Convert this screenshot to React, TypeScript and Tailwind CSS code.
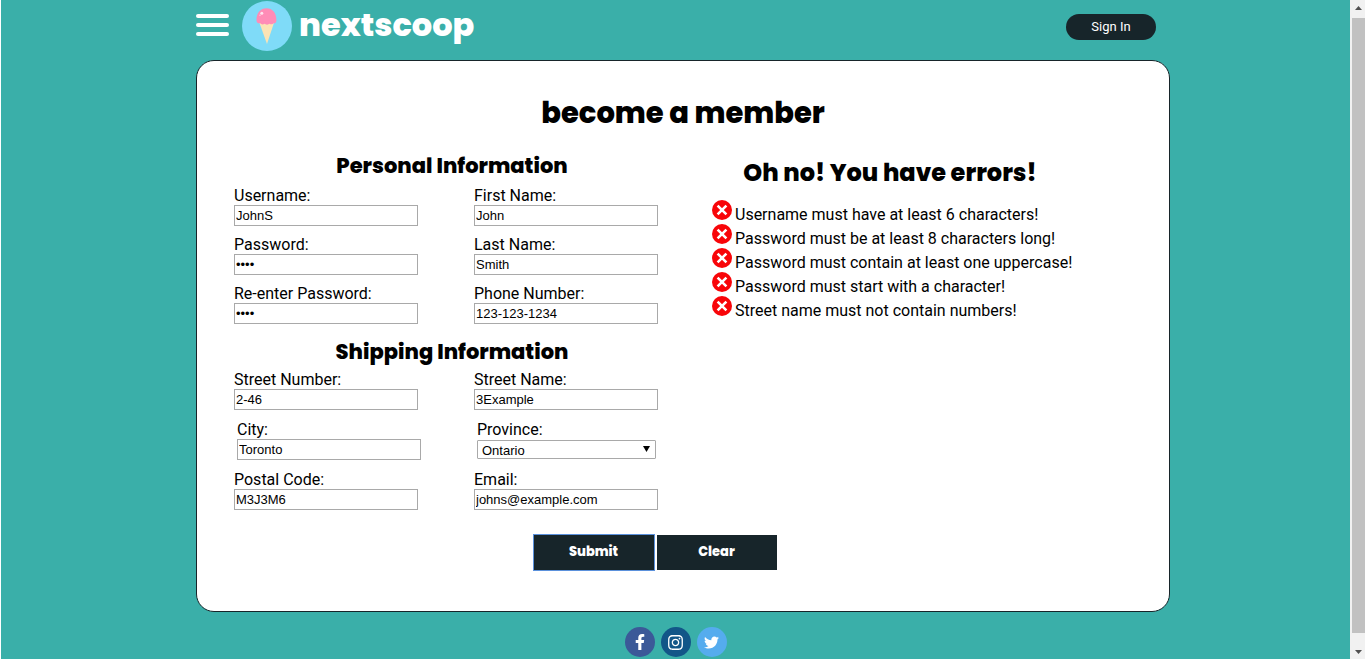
import { FaFacebookF, FaInstagram, FaTwitter } from "react-icons/fa";

const heavy = "font-['Poppins','Inter',sans-serif] font-extrabold";
const box =
  "block border border-[#a9a9a9] bg-white font-['Liberation_Sans',Arial,sans-serif] text-[13px] text-black outline-none";

type FieldProps = { id: string; label: string; value: string; type?: string; inset?: boolean };

function Field({ id, label, value, type = "text", inset }: FieldProps) {
  return (
    <div className={inset ? "pl-[3px]" : ""}>
      <label htmlFor={id} className="block text-base leading-[19px]">
        {label}
      </label>
      <input id={id} type={type} defaultValue={value} className={`${box} h-[21px] w-[184px] px-px`} />
    </div>
  );
}

function ProvinceField() {
  return (
    <div className="pl-[3px]">
      <label htmlFor="province" className="block text-base leading-[19px]">
        Province:
      </label>
      <div className="relative w-[179px] pt-px">
        <select id="province" defaultValue="Ontario" className={`${box} h-[19px] w-full appearance-none rounded-[1px] px-1 pb-px`}>
          <option>Alberta</option>
          <option>British Columbia</option>
          <option>Ontario</option>
          <option>Quebec</option>
        </select>
        <svg viewBox="0 0 7 6" className="pointer-events-none absolute top-[7px] right-[6px] h-[6px] w-[7px]" aria-hidden="true">
          <path d="M0 0h7L3.5 6z" />
        </svg>
      </div>
    </div>
  );
}

function ErrorIcon() {
  return (
    <svg viewBox="0 0 20 20" className="h-5 w-5 shrink-0" aria-hidden="true">
      <circle cx="10" cy="10" r="10" fill="#f80509" />
      <path d="M5.6 5.6l8.8 8.8M14.4 5.6l-8.8 8.8" stroke="#fff" strokeWidth="2.6" />
    </svg>
  );
}

function Logo() {
  return (
    <svg viewBox="0 0 50 50" className="h-[50px] w-[50px]" aria-hidden="true">
      <circle cx="25" cy="25" r="25" fill="#7fdbf8" />
      <path d="M17.5 22h14.4L25 43z" fill="#fbe3b5" />
      <path d="M14.5 19.5C14.3 12 18.5 7.2 24.5 7.2S34.5 12 34.4 19.5c0 2-1.2 3-2.7 2.8-1 1.3-3 1.3-4 .5-1.5 1.1-3.9 1.1-5.3 0-1.3 1-3.3.7-4.2-.5-2 .2-3.7-.6-3.7-2.8z" fill="#ff8cb7" />
      <circle cx="19.8" cy="12.2" r="1.5" fill="#ffe3ee" />
      <circle cx="18" cy="14.2" r=".8" fill="#ffc4da" />
    </svg>
  );
}

const errors = [
  "Username must have at least 6 characters!",
  "Password must be at least 8 characters long!",
  "Password must contain at least one uppercase!",
  "Password must start with a character!",
  "Street name must not contain numbers!",
];

const social = "flex h-[30px] w-[30px] items-center justify-center rounded-full text-white";

export default function App() {
  return (
    <div className="flex min-h-screen bg-white pl-px font-['Roboto',sans-serif] text-black">
      <div className="flex-1 bg-[#3aafa9] pb-[2px]">
        <div className="pl-[15px]">
          <div className="mx-auto w-full max-w-[974px]">
            <header className="flex h-[60px] items-start">
              <button type="button" aria-label="Menu" className="mt-[14px] flex w-[33px] flex-col gap-[5px]">
                <span className="h-1 w-full rounded-full bg-white" />
                <span className="h-1 w-full rounded-full bg-white" />
                <span className="h-1 w-full rounded-full bg-white" />
              </button>
              <a href="#" className="ml-[13px] flex items-start gap-[7px] pt-px text-white">
                <Logo />
                <span className={`${heavy} text-[32px] leading-[48px]`}>nextscoop</span>
              </a>
              <button type="button" className="mt-[14px] mr-[14px] ml-auto h-[26px] w-[90px] rounded-full bg-[#17252a] text-[13px] text-white">
                Sign In
              </button>
            </header>

            <main className="rounded-[18px] border border-[#17252a] bg-white pt-8 pb-[41px]">
              <h1 className={`${heavy} text-center text-[29px] leading-10`}>become a member</h1>
              <form className="mx-auto max-w-[898px]" onSubmit={(e) => e.preventDefault()}>
                <div className="flex gap-[42px] pt-[17px]">
                  <div className="w-[436px]">
                    <h2 className={`${heavy} text-center text-[21px] leading-8`}>Personal Information</h2>
                    <div className="mt-1 grid grid-cols-[240px_184px] gap-y-[9px]">
                      <Field id="username" label="Username:" value="JohnS" />
                      <Field id="first" label="First Name:" value="John" />
                      <Field id="password" label="Password:" value="abcd" type="password" />
                      <Field id="last" label="Last Name:" value="Smith" />
                      <Field id="password2" label="Re-enter Password:" value="abcd" type="password" />
                      <Field id="phone" label="Phone Number:" value="123-123-1234" />
                    </div>
                    <h2 className={`${heavy} mt-3 text-center text-[21px] leading-8`}>Shipping Information</h2>
                    <div className="mt-[2px] grid grid-cols-[240px_187px] gap-y-[10px]">
                      <Field id="streetno" label="Street Number:" value="2-46" />
                      <Field id="street" label="Street Name:" value="3Example" />
                      <Field id="city" label="City:" value="Toronto" inset />
                      <ProvinceField />
                      <Field id="postal" label="Postal Code:" value="M3J3M6" />
                      <Field id="email" label="Email:" value="johns@example.com" />
                    </div>
                  </div>
                  <section className="w-[356px] pt-[7px]">
                    <h2 className={`${heavy} text-center text-2xl leading-8`}>Oh no! You have errors!</h2>
                    <ul className="mt-[11px]">
                      {errors.map((text) => (
                        <li key={text} className="flex h-6 items-start gap-[3px]">
                          <ErrorIcon />
                          <span className="pt-[3px] text-base leading-6 whitespace-nowrap">{text}</span>
                        </li>
                      ))}
                    </ul>
                  </section>
                </div>
                <div className="mt-[25px] flex max-w-[842px] justify-center gap-[3px]">
                  <button type="submit" className={`${heavy} h-[35px] w-[120px] bg-[#17252a] pb-[2px] text-[13px] text-white outline-1 outline-[#5b91dc]`}>
                    Submit
                  </button>
                  <button type="reset" className={`${heavy} h-[35px] w-[120px] bg-[#17252a] pb-[2px] text-[13px] text-white`}>
                    Clear
                  </button>
                </div>
              </form>
            </main>
          </div>
        </div>

        <footer className="mt-[15px] flex justify-center gap-[6px]">
          <a href="#" aria-label="Facebook" className={`${social} bg-[#3b5998]`}>
            <FaFacebookF size={16} />
          </a>
          <a href="#" aria-label="Instagram" className={`${social} bg-[#125688]`}>
            <FaInstagram size={17} />
          </a>
          <a href="#" aria-label="Twitter" className={`${social} bg-[#55acee]`}>
            <FaTwitter size={15} />
          </a>
        </footer>
      </div>

      <div className="flex w-[15px] flex-col items-center bg-[#f1f1f1] pl-[2px]" aria-hidden="true">
        <svg viewBox="0 0 13 18" className="h-[18px] w-[13px]">
          <path d="M3 10l3.5-4 3.5 4z" fill="#505050" />
        </svg>
        <div className="w-full flex-1 bg-[#c1c1c1]" />
        <svg viewBox="0 0 13 26" className="h-[26px] w-[13px]">
          <path d="M3 17l3.5 4 3.5-4z" fill="#505050" />
        </svg>
      </div>
    </div>
  );
}
